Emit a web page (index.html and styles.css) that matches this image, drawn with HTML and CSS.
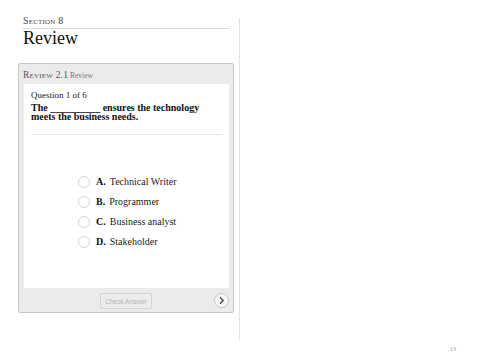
FILE: index.html
```
<!DOCTYPE html>
<html lang="en">
<head>
  <meta charset="UTF-8">
  <title>Review</title>
  <link rel="stylesheet" href="styles.css">
</head>
<body>

  <div class="page">
    <!-- Colonne gauche -->
    <div class="column">
      <div class="section-label">Section 8</div>
      <h1 class="section-title">Review</h1>

      <div class="review-card">
        <div class="review-header"><span class="review-num">Review 2.1</span> Review</div>

        <div class="review-body">
          <div class="question-count">Question 1 of 6</div>
          <div class="question-text">The __________ ensures the technology meets the business needs.</div>
          <div class="question-rule"></div>

          <div class="answers">
            <div class="answer"><span class="radio"></span><b>A.</b> Technical Writer</div>
            <div class="answer"><span class="radio"></span><b>B.</b> Programmer</div>
            <div class="answer"><span class="radio"></span><b>C.</b> Business analyst</div>
            <div class="answer"><span class="radio"></span><b>D.</b> Stakeholder</div>
          </div>
        </div>

        <div class="review-footer">
          <button class="check-button">Check Answer</button>
          <button class="next-button">
            <svg width="9" height="9" viewBox="0 0 9 9"><path d="M3 1.2 L6.2 4.5 L3 7.8" fill="none" stroke="#444" stroke-width="1.3"/></svg>
          </button>
        </div>
      </div>
    </div>

    <div class="divider"></div>

    <!-- Colonne droite -->
    <div class="column-right">
      <div class="page-number">13</div>
    </div>
  </div>

</body>
</html>
```

FILE: styles.css
```
body {
  margin: 0;
  padding: 0;
  background: #fff;
  font-family: "Liberation Serif", "DejaVu Serif", serif;
  color: #222;
  overflow: hidden;
}

.page {
  display: flex;
  height: 360px;
}

.column {
  width: 216px;
  margin-left: 18px;
  margin-top: 15px;
}

.divider {
  width: 1px;
  margin: 18px 0 0 5px;
  height: 322px;
  background: #e4e4e4;
}

.section-label {
  margin: 0 4px 0 5px;
  padding-bottom: 2px;
  border-bottom: 1px solid #dcdcdc;
  font-variant: small-caps;
  font-size: 10px;
  color: #444;
  letter-spacing: 0.2px;
}

.section-title {
  margin: 0 0 0 5px;
  font-size: 18px;
  font-weight: normal;
  color: #111;
  line-height: 18px;
}

.review-card {
  margin-top: 16px;
  background: #ebebeb;
  border: 1px solid #c6c6c6;
  border-radius: 2px;
  height: 248px;
  display: flex;
  flex-direction: column;
}

.review-header {
  padding: 6px 4px 0 4px;
  height: 14px;
  font-size: 7.5px;
  color: #777;
}

.review-num {
  font-variant: small-caps;
  font-size: 9.5px;
  color: #555;
  letter-spacing: 0.2px;
}

.review-body {
  margin: 0 4px 0 5px;
  height: 204px;
  background: #fff;
  padding: 6px 7px 0 7px;
  box-sizing: border-box;
}

.question-count {
  font-size: 9px;
  line-height: 11px;
  color: #222;
}

.question-text {
  margin-top: 2px;
  font-size: 10px;
  line-height: 9px;
  font-weight: bold;
  color: #111;
  width: 178px;
}

.question-rule {
  margin-top: 13px;
  border-top: 1px solid #e6e6e6;
}

.answers {
  display: flex;
  flex-direction: column;
  gap: 8px;
  margin-top: 41px;
  padding-left: 47px;
}

.answer {
  display: flex;
  align-items: center;
  font-size: 10px;
  line-height: 12px;
  color: #222;
}

.answer b {
  margin-right: 4px;
  color: #111;
}

.radio {
  width: 10px;
  height: 10px;
  border: 1px solid #d4d4d4;
  border-radius: 50%;
  margin-right: 6px;
  background: #fff;
}

.review-footer {
  flex: 1;
  display: flex;
  align-items: flex-start;
  justify-content: center;
  padding-top: 5px;
  position: relative;
}

.check-button {
  width: 52px;
  height: 16px;
  padding: 0;
  border: 1px solid #d2d2d2;
  border-radius: 2px;
  background: #ececec;
  font-family: "Liberation Sans", Arial, sans-serif;
  font-size: 6.5px;
  color: #b4b4b4;
}

.next-button {
  position: absolute;
  right: 4px;
  top: 5px;
  width: 15px;
  height: 15px;
  padding: 0;
  border: 1px solid #c4c4c4;
  border-radius: 50%;
  background: #f6f6f6;
  display: flex;
  align-items: center;
  justify-content: center;
}

.column-right {
  flex: 1;
  position: relative;
}

.page-number {
  position: absolute;
  right: 24px;
  bottom: 8px;
  font-family: "Liberation Serif", serif;
  font-size: 6px;
  color: #999;
}
```
